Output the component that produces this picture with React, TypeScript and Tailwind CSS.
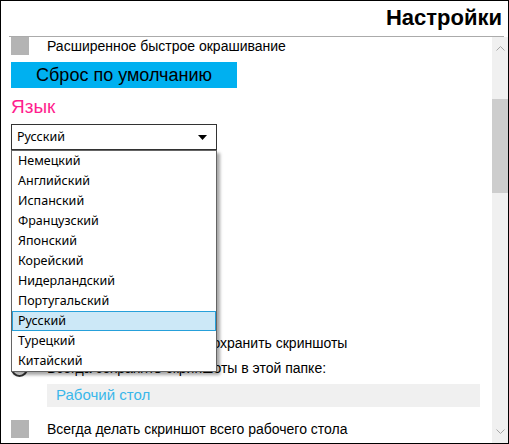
import React from "react";

const langs = [
  "Немецкий",
  "Английский",
  "Испанский",
  "Французский",
  "Японский",
  "Корейский",
  "Нидерландский",
  "Португальский",
  "Русский",
  "Турецкий",
  "Китайский",
];

const arial = { fontFamily: '"Liberation Sans", Arial, sans-serif' };
const segoe = { fontFamily: '"Noto Sans", "Open Sans", sans-serif' };

export default function App() {
  return (
    <div
      className="w-[509px] h-[444px] border border-black bg-white flex flex-col overflow-hidden text-black"
      style={arial}
    >
      <div className="h-[35px] flex items-end justify-end pr-[6px] pb-[7px]">
        <span className="text-[22px] font-bold leading-none">Настройки</span>
      </div>
      <div className="h-px bg-[#ababab] ml-[8px] mr-[4px]" />
      <div className="flex-1 flex min-h-0">
        <div className="flex-1 relative overflow-hidden">
          <div className="flex flex-col">
            <div className="flex items-center h-[18px] pl-[10px]">
              <div className="w-[18px] h-[18px] bg-[#b4b4b4]" />
              <span className="ml-[18px] text-[14px] leading-none">
                Расширенное быстрое окрашивание
              </span>
            </div>
            <div className="ml-[10px] mt-[7px] w-[226px] h-[26px] bg-[#00b0f0] flex items-center justify-center text-[18px] leading-none">
              Сброс по умолчанию
            </div>
            <div className="ml-[10px] mt-[7px] text-[19px] leading-[24px] text-[#ff1f8e]">
              Язык
            </div>
            <div
              className="ml-[10px] mt-[5px] w-[206px] h-[26px] border border-[#333] flex items-center justify-between pl-[5px] pr-[9px] text-[12.5px]"
              style={segoe}
            >
              <span>Русский</span>
              <svg width="9" height="5" viewBox="0 0 9 5">
                <path d="M0 0 H9 L4.5 5 Z" fill="#000" />
              </svg>
            </div>
            <div className="h-[182px]" />
            <div className="flex items-center h-[22px] pl-[10px]">
              <div className="w-[17px] h-[17px] rounded-full border-2 border-[#333]" />
              <span className="ml-[19px] text-[14px] leading-none">
                Всегда спрашивать, где сохранить скриншоты
              </span>
            </div>
            <div className="flex items-center h-[22px] pl-[10px] mt-[3px]">
              <div className="w-[17px] h-[17px] rounded-full border-2 border-[#333]" />
              <span className="ml-[19px] text-[14px] leading-none">
                Всегда сохранять скриншоты в этой папке:
              </span>
            </div>
            <div className="ml-[46px] mt-[5px] w-[433px] h-[23px] bg-[#f0f0f0] flex items-center pl-[9px] text-[15px] text-[#3ab7ea]">
              Рабочий стол
            </div>
            <div className="flex items-center h-[18px] pl-[10px] mt-[13px]">
              <div className="w-[18px] h-[18px] bg-[#b4b4b4]" />
              <span className="ml-[18px] text-[14px] leading-none">
                Всегда делать скриншот всего рабочего стола
              </span>
            </div>
          </div>

          <div
            className="absolute left-[10px] top-[113px] w-[206px] border border-[#646464] bg-white shadow-[3px_3px_3px_rgba(0,0,0,0.35)]"
            style={segoe}
          >
            {langs.map((l) => (
              <div
                key={l}
                className={
                  l === "Русский"
                    ? "h-[20px] flex items-center pl-[5px] text-[12.5px] bg-[#cce8f7] border border-[#26a0da]"
                    : "h-[20px] flex items-center pl-[6px] text-[12.5px]"
                }
              >
                {l}
              </div>
            ))}
          </div>
        </div>
        <div className="w-[16px] bg-[#f0f0f0] flex flex-col items-center">
          <div className="h-[22px] flex items-center justify-center">
            <svg width="9" height="5" viewBox="0 0 9 5">
              <path d="M0.5 4.5 L4.5 0.5 L8.5 4.5" fill="none" stroke="#a6a6a6" strokeWidth="1" />
            </svg>
          </div>
          <div className="mt-[40px] w-full h-[94px] bg-[#cdcdcd]" />
          <div className="flex-1" />
          <div className="h-[14px] flex items-start justify-center">
            <svg width="9" height="5" viewBox="0 0 9 5">
              <path d="M0.5 0.5 L4.5 4.5 L8.5 0.5" fill="none" stroke="#a6a6a6" strokeWidth="1" />
            </svg>
          </div>
        </div>
      </div>
    </div>
  );
}
